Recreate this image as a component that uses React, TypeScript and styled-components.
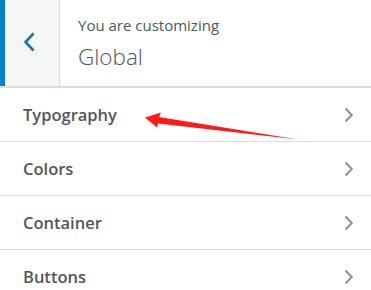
import React from "react";
import styled, { createGlobalStyle } from "styled-components";

const Global = createGlobalStyle`
  html, body { margin: 0; padding: 0; background: #fff; }
  body { font-family: "Open Sans", "Noto Sans", sans-serif; -webkit-font-smoothing: antialiased; }
`;

const Panel = styled.div`
  position: relative;
  width: 371px;
  height: 290px;
  overflow: hidden;
  background: #fff;
`;

const Header = styled.div`
  display: flex;
  height: 86px;
  border-bottom: 2px solid #dcdcde;
`;

const BackButton = styled.div`
  flex: none;
  display: flex;
  align-items: center;
  padding-bottom: 3px;
  background: #f5f6f6;
  border-left: 5px solid #0283c9;
  border-right: 1px solid #dcdcde;
  box-sizing: border-box;
  width: 60px;
  svg { margin-left: 18px; }
`;

const Titles = styled.div`
  display: flex;
  flex-direction: column;
  justify-content: center;
  padding-left: 18px;
  padding-top: 1px;
  color: #50575e;
`;

const Sub = styled.span`
  font-size: 15px;
  line-height: 20px;
`;

const Title = styled.span`
  font-size: 22.5px;
  font-weight: 300;
  line-height: 30px;
  margin-top: 7px;
`;

const Row = styled.div`
  display: flex;
  align-items: center;
  justify-content: space-between;
  height: 53px;
  padding: 0 16px 0 23px;
  border-bottom: 1px solid #dcdcde;
  color: #50575e;
  font-size: 16.5px;
  font-weight: 600;
`;

const Arrow = styled.svg`
  position: absolute;
  left: 0;
  top: 0;
  pointer-events: none;
`;

const Chevron = ({ dir, color }: { dir: "left" | "right"; color: string }) =>
  dir === "left" ? (
    <svg width="12" height="20" viewBox="0 0 12 20">
      <polyline points="10.5,1.5 2.5,10 10.5,18.5" fill="none" stroke={color} strokeWidth="2.6" />
    </svg>
  ) : (
    <svg width="12" height="18" viewBox="0 0 12 18">
      <polyline points="2.5,2.5 8.8,9 2.5,15.5" fill="none" stroke={color} strokeWidth="2" />
    </svg>
  );

const items = ["Typography", "Colors", "Container", "Buttons"];

export default function App() {
  return (
    <>
      <Global />
      <Panel>
        <Header>
          <BackButton>
            <Chevron dir="left" color="#2271b1" />
          </BackButton>
          <Titles>
            <Sub>You are customizing</Sub>
            <Title>Global</Title>
          </Titles>
        </Header>
        {items.map((t) => (
          <Row key={t}>
            <span>{t}</span>
            <Chevron dir="right" color="#8c8f94" />
          </Row>
        ))}
        <Arrow width="371" height="290" viewBox="0 0 371 290">
          <polygon
            points="145,117.5 161,112.5 159,117 298,139.5 158,123.5 157,127.5"
            fill="#ff1a1a"
          />
        </Arrow>
      </Panel>
    </>
  );
}
